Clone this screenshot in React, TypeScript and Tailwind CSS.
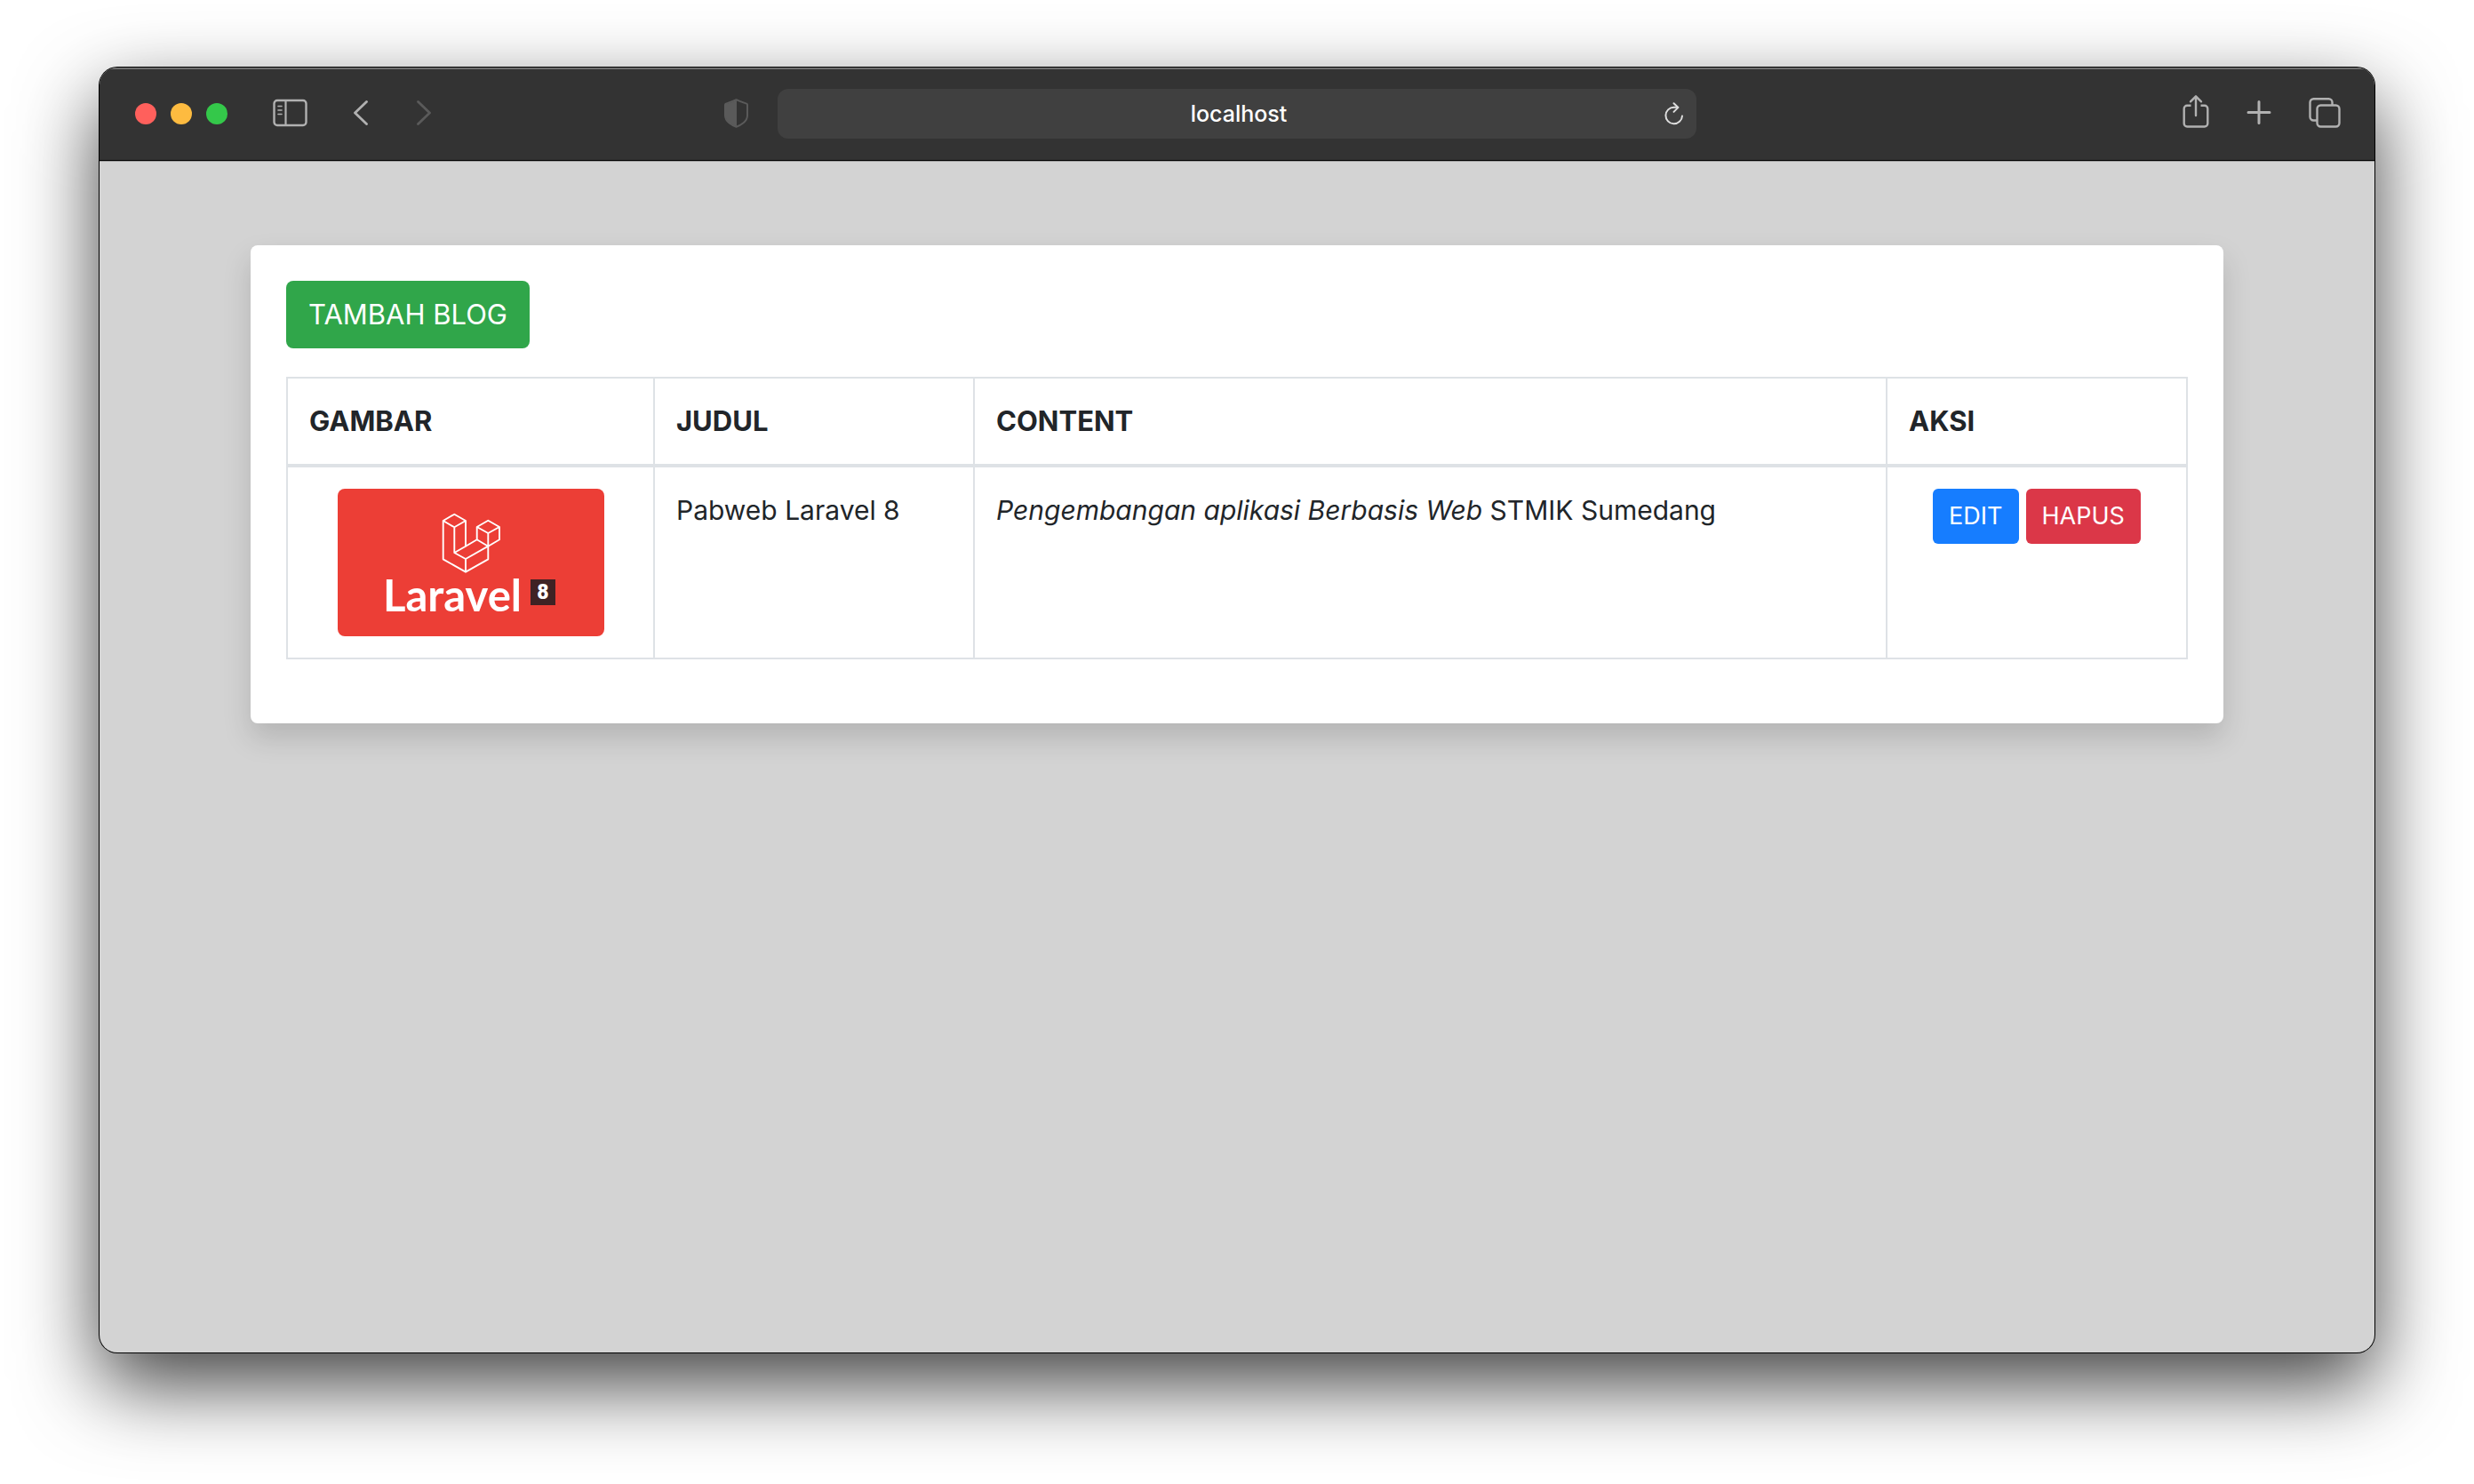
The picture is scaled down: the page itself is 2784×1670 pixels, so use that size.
import React from "react";

function SidebarIcon() {
  return (
    <svg width="40" height="44" viewBox="0 0 40 44" fill="none" stroke="currentColor" strokeLinecap="round">
      <rect x="1.5" y="7" width="36" height="28" rx="3.5" strokeWidth="2.4" />
      <path d="M14.5 7v28" strokeWidth="2.2" />
      <path d="M6 13.5h4M6 18h4M6 22.5h4" strokeWidth="1.6" />
    </svg>
  );
}

function BackIcon() {
  return (
    <svg width="16" height="44" viewBox="0 0 16 44" fill="none" stroke="currentColor" strokeWidth="2.8" strokeLinecap="round" strokeLinejoin="round">
      <path d="M14.5 8.500L1.500 21l13 12.500" />
    </svg>
  );
}

function ForwardIcon() {
  return (
    <svg width="16" height="44" viewBox="0 0 16 44" fill="none" stroke="currentColor" strokeWidth="2.8" strokeLinecap="round" strokeLinejoin="round">
      <path d="M1.500 8.500l13 12.500-13 12.500" />
    </svg>
  );
}

function ShieldIcon() {
  return (
    <svg width="28" height="44" viewBox="0 0 28 44" fill="none">
      <path
        d="M13.5 6.2C17 8 21 9.4 25 10.6c.7.2 1 .6 1 1.2V24c0 3.2-1.5 5.8-4.4 8.2-2.4 1.9-5.4 3.6-8.1 4.6-2.7-1-5.7-2.7-8.1-4.6C2.5 29.800 1 27.200 1 24V11.800c0-.6.3-1 1-1.2 4-1.200 8-2.600 11.500-4.400z"
        stroke="currentColor"
        strokeWidth="2"
        strokeLinejoin="round"
      />
      <path d="M14 6.500V36.500C7 34 1.500 29.500 1.500 24V11.200C6 10 10 8.500 14 6.500z" fill="currentColor" />
    </svg>
  );
}

function ReloadIcon() {
  return (
    <svg width="22" height="28" viewBox="0 0 22 28" fill="none" stroke="currentColor" strokeWidth="2" strokeLinecap="round" strokeLinejoin="round">
      <path d="M20 16.500a9.300 9.300 0 1 1-9.300-9.800h3.800" />
      <path d="M10.500 2.300l5 4.600-5 5" />
    </svg>
  );
}

function ShareIcon() {
  return (
    <svg width="30" height="44" viewBox="0 0 30 44" fill="none" stroke="currentColor" strokeWidth="2.4" strokeLinecap="round" strokeLinejoin="round">
      <path d="M9.500 12.700H5.200a3.500 3.500 0 0 0-3.500 3.500v16.800a3.500 3.500 0 0 0 3.500 3.500h19.600a3.500 3.500 0 0 0 3.500-3.500V16.200a3.500 3.500 0 0 0-3.500-3.500h-4.300" strokeLinecap="butt" />
      <path d="M15 24V3M9 8.300L15 2.300l6 6" />
    </svg>
  );
}

function PlusIcon() {
  return (
    <svg width="28" height="44" viewBox="0 0 28 44" fill="none" stroke="currentColor" strokeWidth="3" strokeLinecap="round">
      <path d="M14 8.500v24M2 20.500h24" />
    </svg>
  );
}

function TabsIcon() {
  return (
    <svg width="36" height="44" viewBox="0 0 36 44" fill="none" stroke="currentColor" strokeWidth="2.4">
      <rect x="9.500" y="12.500" width="25" height="24" rx="4" />
      <path d="M9.500 29.500H5.500a4 4 0 0 1-4-4V9.200a4 4 0 0 1 4-4h17a4 4 0 0 1 4 4v3.300" />
    </svg>
  );
}

function LaravelImage() {
  return (
    <svg
      role="img"
      aria-label="Laravel 8"
      className="mx-auto block rounded-lg bg-[#ec3e36]"
      width="300"
      height="166"
      viewBox="0 0 300 166"
    >
      <g fill="none" stroke="#fff" strokeWidth="1.9" strokeLinejoin="round">
        <path d="M118.700 36l12.600-7.300L144 36v28.700l12.700-7.400V43l12.600-7.300L182 43v14.300l-12.700 7.400v14.600L144 93.700l-25.300-14.400z" />
        <path d="M118.700 36l12.600 7.300L144 36M131.300 43.300V72L144 79v14.700M131.300 72L144 64.700M144 79l25.300-14.300M156.700 57.300l12.600 7.400V50M156.700 43l12.600 7L182 43" />
      </g>
      <text x="51" y="138" fill="#fff" fontFamily='"Lato", sans-serif' fontWeight="700" fontSize="49">
        Laravel
      </text>
      <rect x="217" y="102" width="28" height="29" fill="#3f2224" />
      <text x="231" y="124" fill="#fff" textAnchor="middle" fontFamily='"Roboto", sans-serif' fontWeight="900" fontSize="23">
        8
      </text>
    </svg>
  );
}

const posts = [
  {
    title: "Pabweb Laravel 8",
    content: (
      <>
        <em>Pengembangan aplikasi Berbasis Web</em> STMIK Sumedang
      </>
    ),
  },
];

function Toolbar() {
  return (
    <header className="grid h-[105px] grid-cols-[1fr_1034px_1fr] items-center border-b border-black bg-[#333333] text-[#b1b1b1] shadow-[inset_0_2px_0_#6f6f6f]">
      <div className="flex items-center pr-8 pl-10">
        <div className="flex gap-4">
          <button aria-label="Close" className="size-6 rounded-full bg-[#ff605c]" />
          <button aria-label="Minimize" className="size-6 rounded-full bg-[#fdbb40]" />
          <button aria-label="Zoom" className="size-6 rounded-full bg-[#34c84a]" />
        </div>
        <button aria-label="Sidebar" className="ml-[51px]">
          <SidebarIcon />
        </button>
        <button aria-label="Back" className="ml-[51px]">
          <BackIcon />
        </button>
        <button aria-label="Forward" className="ml-[55px] text-[#5a5a5a]">
          <ForwardIcon />
        </button>
        <button aria-label="Privacy report" className="ml-auto text-[#5a5a5a]">
          <ShieldIcon />
        </button>
      </div>
      <div className="flex h-14 items-center rounded-xl bg-[#404040] pr-3.5 pl-12">
        <input
          aria-label="Address"
          defaultValue="localhost"
          className="min-w-0 flex-1 bg-transparent text-center text-[25px] leading-8 font-medium text-white outline-none"
        />
        <button aria-label="Reload" className="ml-2 text-[#dedede]">
          <ReloadIcon />
        </button>
      </div>
      <div className="flex items-center justify-end gap-[42px] pr-[38px]">
        <button aria-label="Share">
          <ShareIcon />
        </button>
        <button aria-label="New tab">
          <PlusIcon />
        </button>
        <button aria-label="Tab overview">
          <TabsIcon />
        </button>
      </div>
    </header>
  );
}

export default function App() {
  return (
    <div className="flex min-h-screen flex-col bg-white px-28 pt-[76px] pb-[148px] font-['Inter',sans-serif] text-[#212529]">
      <div className="flex flex-1 flex-col overflow-hidden rounded-[20px] bg-[#d3d3d3] shadow-[0_0_0_1px_#000,0_36px_90px_rgba(0,0,0,0.75)]">
        <Toolbar />
        <main className="flex-1 border-t border-[#9d9d9d] px-10 pt-[94px] pb-10">
          <section className="mx-auto max-w-[2220px] rounded-lg bg-white p-10 shadow-[0_16px_32px_rgba(0,0,0,0.15)]">
            <a href="#tambah" className="mb-8 inline-block rounded-lg bg-[#30a64a] px-[25px] py-3.5 align-top text-[31px] leading-[48px] text-white">
              TAMBAH BLOG
            </a>
            <table className="mb-8 w-full table-fixed border-collapse border-2 border-[#dee2e6] text-[30px] leading-[48px]">
              <colgroup>
                <col className="w-[413px]" />
                <col className="w-[360px]" />
                <col />
                <col className="w-[338px]" />
              </colgroup>
              <thead className="text-[31px]">
                <tr>
                  {["GAMBAR", "JUDUL", "CONTENT", "AKSI"].map((name) => (
                    <th key={name} scope="col" className="border-2 border-b-4 border-[#dee2e6] p-6 text-left font-bold">
                      {name}
                    </th>
                  ))}
                </tr>
              </thead>
              <tbody>
                {posts.map((post) => (
                  <tr key={post.title} className="align-top">
                    <td className="border-2 border-[#dee2e6] p-6">
                      <LaravelImage />
                    </td>
                    <td className="border-2 border-[#dee2e6] p-6">{post.title}</td>
                    <td className="border-2 border-[#dee2e6] p-6">{post.content}</td>
                    <td className="border-2 border-[#dee2e6] p-6">
                      <div className="flex justify-center gap-2 text-[27px] leading-[42px] text-white">
                        <a href="#edit" className="rounded-md bg-[#167dff] px-[18px] py-2.5">
                          EDIT
                        </a>
                        <button className="rounded-md bg-[#db3748] px-[18px] py-2.5">HAPUS</button>
                      </div>
                    </td>
                  </tr>
                ))}
              </tbody>
            </table>
          </section>
        </main>
      </div>
    </div>
  );
}
